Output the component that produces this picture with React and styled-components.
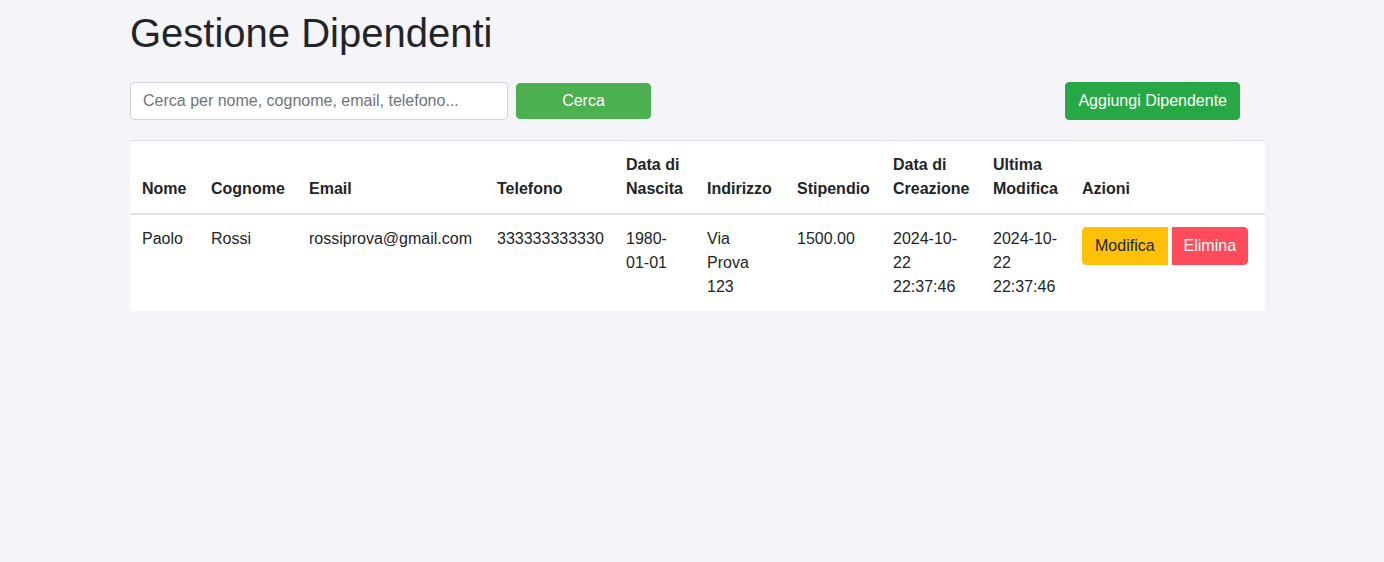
import React from 'react';
import styled, { createGlobalStyle } from 'styled-components';

const GlobalStyle = createGlobalStyle`
  body {
    margin: 0;
    background-color: #f4f4f9;
    font-family: "Liberation Sans", Arial, sans-serif;
    font-size: 16px;
    line-height: 1.5;
    color: #212529;
  }
  * {
    box-sizing: border-box;
  }
`;

const Page = styled.div`
  width: 1135px;
  margin-left: 130px;
`;

const Title = styled.h1`
  margin: 0;
  padding-top: 9px;
  font-size: 40px;
  font-weight: 500;
  line-height: 1.2;
  margin-bottom: 25px;
`;

const Toolbar = styled.div`
  display: flex;
  align-items: center;
  padding-right: 25px;
  margin-bottom: 20px;

  & .spacer {
    flex: 1;
  }
`;

const SearchInput = styled.input`
  width: 378px;
  height: 38px;
  padding: 6px 12px;
  border: 1px solid #ced4da;
  border-radius: 4px;
  font-family: inherit;
  font-size: 16px;
  color: #495057;
  background: #fff;

  &::placeholder {
    color: #6c757d;
  }
`;

const Button = styled.button`
  font-family: inherit;
  font-size: 16px;
  line-height: 24px;
  padding: 6px ${(p) => p.$px || 12}px;
  border: 1px solid ${(p) => p.$bg};
  background-color: ${(p) => p.$bg};
  color: ${(p) => p.$color || '#fff'};
  border-radius: ${(p) => p.$radius || '4px'};
  cursor: pointer;
`;

const SearchButton = styled(Button)`
  width: 135px;
  height: 36px;
  padding: 0;
  margin-left: 8px;
`;

const Table = styled.table`
  width: 100%;
  table-layout: fixed;
  border-collapse: collapse;
  background-color: #fff;
  border-top: 1px solid #dee2e6;

  & th,
  & td {
    padding: 12px;
    text-align: left;
  }

  & th {
    vertical-align: bottom;
    font-weight: 700;
    border-bottom: 2px solid #dee2e6;
  }

  & td {
    vertical-align: top;
  }
`;

const Col = styled.col`
  width: ${(p) => p.$w}px;
`;

const Actions = styled.div`
  display: flex;
  gap: 4px;
`;

const columns = [
  ['Nome', 69],
  ['Cognome', 98],
  ['Email', 188],
  ['Telefono', 129],
  ['Data di Nascita', 81],
  ['Indirizzo', 90],
  ['Stipendio', 96],
  ['Data di Creazione', 100],
  ['Ultima Modifica', 89],
  ['Azioni', 195],
];

const employees = [
  {
    nome: 'Paolo',
    cognome: 'Rossi',
    email: 'rossiprova@gmail.com',
    telefono: '333333333330',
    nascita: '1980-01-01',
    indirizzo: 'Via Prova 123',
    stipendio: '1500.00',
    creazione: '2024-10-22 22:37:46',
    modifica: '2024-10-22 22:37:46',
  },
];

const App = () => {
  return (
    <>
      <GlobalStyle />
      <Page>
        <Title>Gestione Dipendenti</Title>
        <Toolbar>
          <SearchInput placeholder="Cerca per nome, cognome, email, telefono..." />
          <SearchButton $bg="#4caf50">Cerca</SearchButton>
          <div className="spacer" />
          <Button $bg="#28a745">Aggiungi Dipendente</Button>
        </Toolbar>
        <Table>
          <colgroup>
            {columns.map(([name, w]) => (
              <Col key={name} $w={w} />
            ))}
          </colgroup>
          <thead>
            <tr>
              {columns.map(([name]) => (
                <th key={name}>{name}</th>
              ))}
            </tr>
          </thead>
          <tbody>
            {employees.map((e) => (
              <tr key={e.email}>
                <td>{e.nome}</td>
                <td>{e.cognome}</td>
                <td>{e.email}</td>
                <td>{e.telefono}</td>
                <td>{e.nascita}</td>
                <td>{e.indirizzo}</td>
                <td>{e.stipendio}</td>
                <td>{e.creazione}</td>
                <td>{e.modifica}</td>
                <td>
                  <Actions>
                    <Button $bg="#ffc107" $color="#212529" $radius="4px 0 0 4px">
                      Modifica
                    </Button>
                    <Button $bg="#ff4b5c" $px={11} $radius="0 4px 4px 0">
                      Elimina
                    </Button>
                  </Actions>
                </td>
              </tr>
            ))}
          </tbody>
        </Table>
      </Page>
    </>
  );
};

export default App;
